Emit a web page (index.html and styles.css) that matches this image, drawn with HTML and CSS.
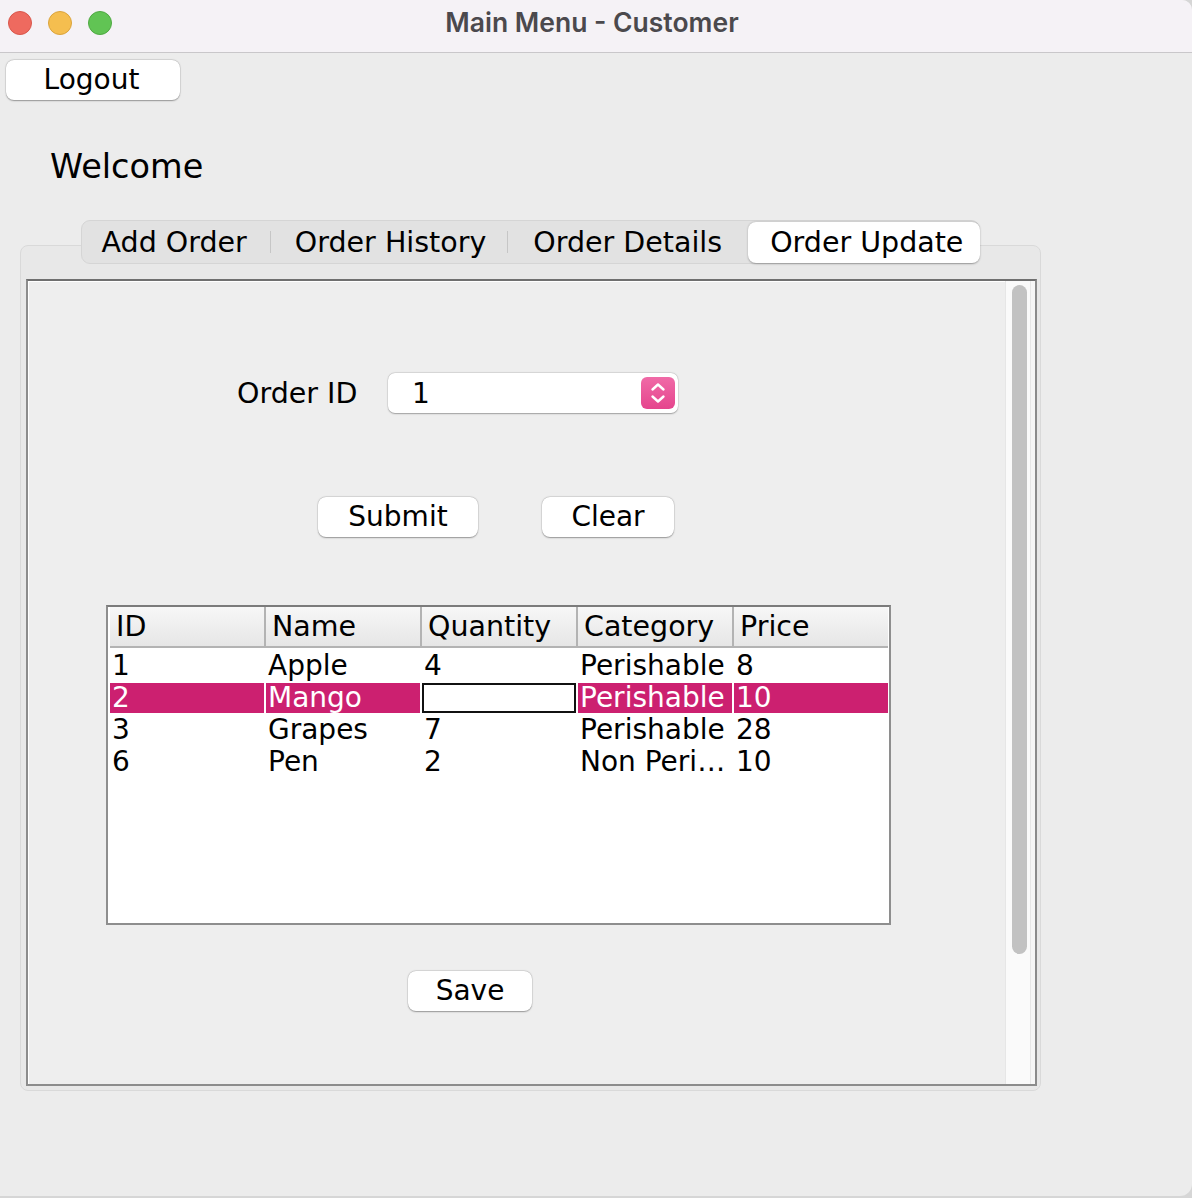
FILE: index.html
```html
<!DOCTYPE html>
<html>
<head>
<meta charset="utf-8">
<title>Main Menu - Customer</title>
<link rel="stylesheet" href="styles.css">
</head>
<body>
<div class="window">
  <div class="titlebar">
    <div class="lights">
      <span class="light red"></span>
      <span class="light yellow"></span>
      <span class="light green"></span>
    </div>
    <div class="title">Main Menu - Customer</div>
  </div>
  <div class="content">
    <button class="btn logout">Logout</button>
    <div class="welcome">Welcome</div>
    <div class="tabs-area">
      <div class="tabbar">
        <div class="tab t1">Add Order</div>
        <span class="sep"></span>
        <div class="tab t2">Order History</div>
        <span class="sep"></span>
        <div class="tab t3">Order Details</div>
        <div class="tab selected">Order Update</div>
      </div>
      <div class="panel">
        <div class="inner">
          <div class="main">
            <div class="order-row">
              <span class="label">Order ID</span>
              <div class="combo">
                <span class="combo-value">1</span>
                <span class="stepper">
                  <svg width="34" height="32" viewBox="0 0 34 32">
                    <path d="M11.5 12.5 L17 7.5 L22.5 12.5" fill="none" stroke="#fff" stroke-width="2.4" stroke-linecap="round" stroke-linejoin="round"/>
                    <path d="M11.5 19.5 L17 24.5 L22.5 19.5" fill="none" stroke="#fff" stroke-width="2.4" stroke-linecap="round" stroke-linejoin="round"/>
                  </svg>
                </span>
              </div>
            </div>
            <div class="btn-row">
              <button class="btn submit">Submit</button>
              <button class="btn clear">Clear</button>
            </div>
            <div class="table">
              <div class="thead">
                <div class="th">ID</div>
                <div class="th">Name</div>
                <div class="th">Quantity</div>
                <div class="th">Category</div>
                <div class="th">Price</div>
              </div>
              <div class="tbody">
                <div class="td">1</div><div class="td">Apple</div><div class="td">4</div><div class="td">Perishable</div><div class="td">8</div>
                <div class="td sel">2</div><div class="td sel">Mango</div><div class="td editor"></div><div class="td sel">Perishable</div><div class="td sel">10</div>
                <div class="td">3</div><div class="td">Grapes</div><div class="td">7</div><div class="td">Perishable</div><div class="td">28</div>
                <div class="td">6</div><div class="td">Pen</div><div class="td">2</div><div class="td">Non Peri…</div><div class="td">10</div>
              </div>
            </div>
            <button class="btn save">Save</button>
          </div>
          <div class="scrollbar">
            <div class="thumb"></div>
          </div>
        </div>
      </div>
    </div>
  </div>
</div>
</body>
</html>
```

FILE: styles.css
```css
* { box-sizing: border-box; }
html, body { margin: 0; padding: 0; }
body {
  background: #d6d6d6;
  font-family: "DejaVu Sans", "Liberation Sans", sans-serif;
  color: #000;
  width: 1192px;
  height: 1198px;
  overflow: hidden;
}
.window {
  width: 1192px;
  height: 1196px;
  background: #ececec;
  border-radius: 0 10px 12px 0;
  overflow: hidden;
}
.titlebar {
  height: 53px;
  background: #f5f2f6;
  border-bottom: 1px solid #c9c7ca;
  display: flex;
  align-items: center;
  position: relative;
}
.lights {
  display: flex;
  gap: 16px;
  padding-left: 8px;
  margin-top: -6px;
}
.light {
  width: 24px;
  height: 24px;
  border-radius: 50%;
  display: block;
}
.red { background: #ee6a5f; border: 1px solid #d9564b; }
.yellow { background: #f5be4f; border: 1px solid #dba43c; }
.green { background: #61c454; border: 1px solid #4fa942; }
.title {
  position: absolute;
  left: 0;
  right: 0;
  top: 6px;
  text-align: center;
  font-family: "Inter", "Roboto", sans-serif;
  font-weight: 600;
  font-size: 26.5px;
  color: #4b494d;
  padding-right: 8px;
}
.content {
  padding-top: 7px;
}
.btn {
  font-family: "DejaVu Sans", sans-serif;
  font-size: 28px;
  background: #fff;
  border: none;
  border-radius: 8px;
  box-shadow: 0 0.5px 1.5px rgba(0,0,0,0.35), 0 0 0 0.5px rgba(0,0,0,0.08);
  height: 40px;
  padding: 0;
  color: #000;
  line-height: 40px;
  display: block;
}
.logout { margin-left: 6px; width: 174px; padding-right: 3px; }
.welcome {
  margin-left: 50px;
  margin-top: 47px;
  font-size: 33.5px;
  line-height: 40px;
  height: 40px;
}
.tabs-area {
  margin-top: 33px;
  margin-left: 20px;
  width: 1021px;
}
.tabbar {
  position: relative;
  z-index: 1;
  margin: 0 auto;
  width: max-content;
  height: 44px;
  background: #e2e2e2;
  border: 1px solid #d5d5d5;
  border-radius: 9px;
  display: flex;
  align-items: center;
  padding: 0;
}
.tab {
  font-size: 28.5px;
  line-height: 41px;
  height: 41px;
  white-space: nowrap;
}
.t1 { padding: 0 23px 0 20px; }
.t2 { padding: 0 21px 0 24px; }
.t3 { padding: 0 26px 0 25px; }
.tab.selected {
  background: #fff;
  border-radius: 8px;
  box-shadow: 0 0.5px 2px rgba(0,0,0,0.3);
  padding: 0 17px 0 22px;
  margin-right: -1px;
}
.sep {
  width: 1px;
  height: 22px;
  background: #c6c6c6;
  display: block;
}
.panel {
  margin-top: -19px;
  height: 846px;
  background: #e8e8e8;
  border: 1px solid #d9d9d9;
  border-radius: 8px;
  padding: 33px 3px 4px 5px;
}
.inner {
  height: 807px;
  border: 2px solid #8c8c8c;
  border-top-color: #6f6f6f;
  background: #eeeeee;
  display: flex;
}
.main {
  flex: 1;
  border-top: 1px solid #fff;
  border-left: 1px solid #fff;
  padding-top: 91px;
}
.order-row {
  display: flex;
  align-items: center;
  margin-left: 208px;
  height: 40px;
}
.label {
  font-size: 28.5px;
  width: 151px;
}
.combo {
  width: 290px;
  height: 40px;
  background: #fff;
  border-radius: 7px;
  box-shadow: 0 0.5px 1.5px rgba(0,0,0,0.3), 0 0 0 0.5px rgba(0,0,0,0.08);
  display: flex;
  align-items: center;
  justify-content: space-between;
  padding: 0 3px 0 24px;
}
.combo-value { font-size: 28px; }
.stepper {
  width: 34px;
  height: 32px;
  border-radius: 6px;
  background: linear-gradient(#f06aa7, #e5458d);
  display: block;
}
.stepper svg { display: block; }
.btn-row {
  display: flex;
  margin-left: 289px;
  margin-top: 84px;
  gap: 64px;
}
.submit { width: 160px; }
.clear { width: 132px; }
.table {
  margin-left: 77px;
  margin-top: 68px;
  width: 785px;
  height: 320px;
  border: 2px solid #8e8e8e;
  border-top-color: #7b7b7b;
  background: #fff;
  padding: 0 1px 0 2px;
}
.thead {
  display: grid;
  grid-template-columns: repeat(5, 154px);
  column-gap: 2px;
  background: #b3b3b3;
  height: 41px;
  border-bottom: 2px solid #b3b3b3;
  width: 778px;
}
.th {
  background: linear-gradient(#f7f7f7, #e6e6e6);
  font-size: 28.5px;
  line-height: 39px;
  padding-left: 6px;
  white-space: nowrap;
}
.tbody {
  display: grid;
  grid-template-columns: repeat(5, 154px);
  grid-auto-rows: 30px;
  column-gap: 2px;
  row-gap: 2px;
  padding-top: 3px;
}
.td {
  font-size: 28px;
  line-height: 30px;
  padding-left: 2px;
  white-space: nowrap;
}
.td.sel {
  background: #cc2070;
  color: #fff;
}
.td.editor {
  background: #fff;
  border: 2px solid #111;
}
.save {
  margin-left: 379px;
  margin-top: 46px;
  width: 124px;
}
.scrollbar {
  width: 30px;
  background: #fafafa;
  border-left: 1px solid #e6e6e6;
  padding: 4px 0 0 6px;
  box-shadow: inset -4px 0 0 #f7f7f7, inset -5px 0 0 #e8e8e8;
}
.thumb {
  width: 15px;
  height: 669px;
  background: #c2c2c2;
  border-radius: 8px;
}
```
